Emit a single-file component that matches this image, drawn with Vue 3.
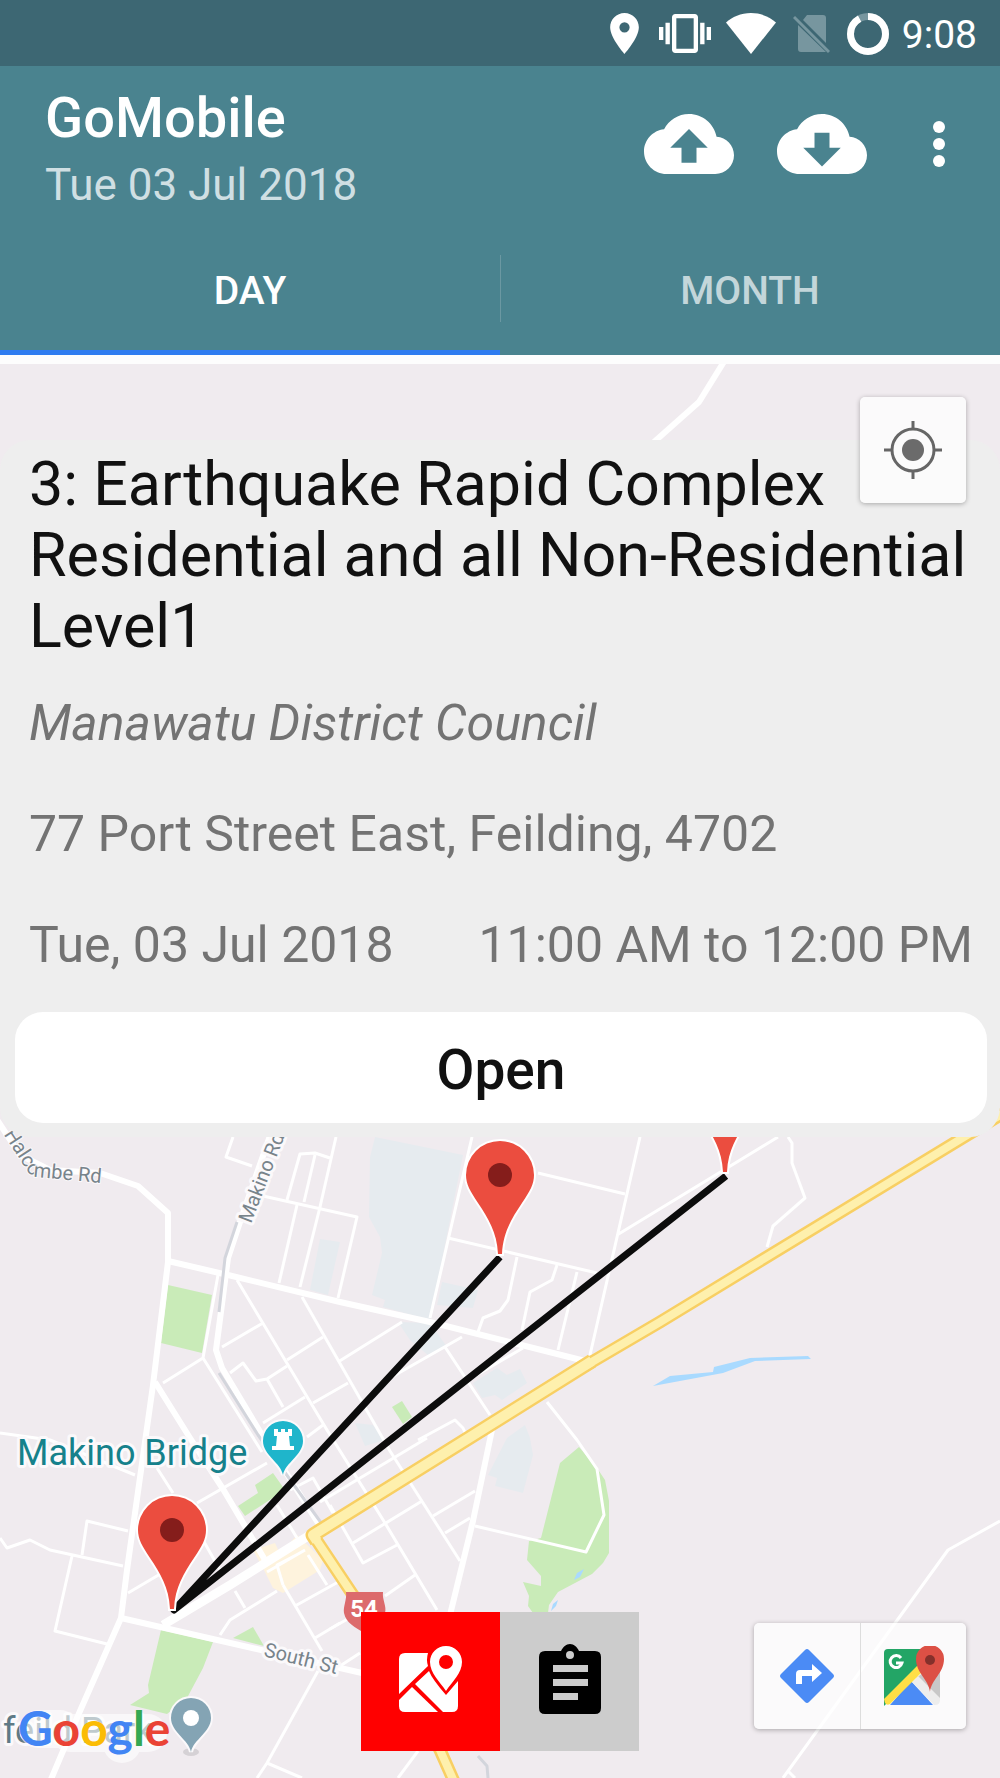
<template>
  <div class="screen">
    <header class="app-header">
      <div class="status-bar">
        <svg class="status-pin" viewBox="5 2 14 20" aria-hidden="true">
          <path d="M12 2C8.13 2 5 5.13 5 9c0 5.25 7 13 7 13s7-7.75 7-13c0-3.87-3.13-7-7-7zm0 9.5a2.5 2.5 0 1 1 0-5 2.5 2.5 0 0 1 0 5z" />
        </svg>
        <svg class="status-vibrate" viewBox="0 3 24 18" aria-hidden="true">
          <path d="M0 15h2V9H0v6zm3 2h2V7H3v10zm19-8v6h2V9h-2zm-3 8h2V7h-2v10zM16.5 3h-9C6.67 3 6 3.67 6 4.5v15c0 .83.67 1.5 1.5 1.5h9c.83 0 1.5-.67 1.5-1.5v-15c0-.83-.67-1.5-1.5-1.5zM16 19H8V5h8v14z" />
        </svg>
        <svg class="status-wifi" viewBox="0 0 50 41" aria-hidden="true">
          <path d="M25 41L0 9.500C6 4 15 0 25 0s19 4 25 9.500z" />
        </svg>
        <svg class="status-sim" viewBox="0 0 37 40" aria-hidden="true">
          <path d="M14 1h16q3 0 3 3v25L10 6zM5 11l28 27H8q-3 0-3-3z" />
          <path d="M1 3L36 38" />
        </svg>
        <svg class="status-battery" viewBox="0 0 42 42" aria-hidden="true">
          <circle class="battery-track" cx="21" cy="21" r="17.500" />
          <circle class="battery-level" cx="21" cy="21" r="17.500" pathLength="100" transform="rotate(-90 21 21)" />
        </svg>
        <span class="clock">9:08</span>
      </div>

      <div class="toolbar">
        <div class="titles">
          <h1>GoMobile</h1>
          <p>Tue 03 Jul 2018</p>
        </div>
        <button class="icon-btn" aria-label="Upload">
          <svg viewBox="0 0 24 24">
            <path d="M19.350 10.040C18.670 6.590 15.640 4 12 4 9.110 4 6.600 5.640 5.350 8.040 2.340 8.360 0 10.910 0 14c0 3.310 2.690 6 6 6h13c2.760 0 5-2.240 5-5 0-2.640-2.050-4.780-4.650-4.960zM14 13v4h-4v-4H7l5-5 5 5h-3z" />
          </svg>
        </button>
        <button class="icon-btn" aria-label="Download">
          <svg viewBox="0 0 24 24">
            <path d="M19.350 10.040C18.670 6.590 15.640 4 12 4 9.110 4 6.600 5.640 5.350 8.040 2.340 8.360 0 10.910 0 14c0 3.310 2.690 6 6 6h13c2.760 0 5-2.240 5-5 0-2.640-2.050-4.780-4.650-4.960zM17 13l-5 5-5-5h3V9h4v4h3z" />
          </svg>
        </button>
        <button class="more-btn" aria-label="More options">
          <svg viewBox="0 0 12 48">
            <circle cx="6" cy="7" r="6" />
            <circle cx="6" cy="24" r="6" />
            <circle cx="6" cy="41" r="6" />
          </svg>
        </button>
      </div>

      <nav class="tabs">
        <button
            v-for="tab in tabs"
            :key="tab"
            class="tab"
            :class="{ active: tab === activeTab }"
            @click="activeTab = tab"
        >
          {{ tab }}
        </button>
      </nav>
    </header>

    <main class="map-view">
      <svg
          class="map"
          viewBox="0 364 1000 1414"
          preserveAspectRatio="xMidYMax slice"
          role="img"
          aria-label="Map"
      >
        <defs>
          <path id="halcombe" d="M-22 1095L26 1169Q30 1176 36 1177L101 1183" />
          <path id="marker" d="M-2 0C-3-22-12-36-22-51C-30-63-34-70-34-79A34 34 0 0 1 34-79C34-70 30-63 22-51C12-36 3-22 2 0Z" />
          <path id="poi" d="M0 34C-2 22-20 14-20 0A20 20 0 0 1 20 0C20 14 2 22 0 34Z" />
        </defs>

        <path v-for="d in blocks" :key="d" class="block" :d="d" />
        <path v-for="d in parks" :key="d" class="park" :d="d" />
        <path class="shops" d="M253 1550L275 1543L280 1554L297 1535L323 1560L320 1570L283 1593L273 1588L265 1572Z" />
        <path class="water" d="M653 1386L670 1376L713 1372L714 1367L750 1358L808 1356L811 1359L755 1361L723 1373Z" />
        <path class="water" d="M574 1580L577 1573L584 1569L580 1577ZM551 1611L553 1604L558 1600L556 1606Z" />

        <path v-for="d in lanes" :key="d" class="lane" :d="d" />
        <path v-for="d in roads" :key="d" class="road" :d="d" />
        <path class="rail" d="M237 1222L225 1258L219 1312M219 1373L258 1435L322 1524" />
        <path class="rail" d="M478 1756L487 1766L488 1778" />
        <path class="avenue" d="M313 1533L230 1585L163 1625" />
        <path class="highway-edge" :d="highway" />
        <path class="highway-edge wide" :d="mainStreet" />
        <path class="highway" :d="highway" />
        <path class="highway wide" :d="mainStreet" />

        <path class="shield" d="M346 1592H383C382 1600 387 1606 385 1613C383 1623 373 1627 364 1633C355 1627 346 1623 344 1613C343 1606 347 1600 346 1592Z" />
        <text class="shield-text" x="364" y="1617">54</text>

        <text class="street bent"><textPath href="#halcombe" startOffset="100%">Halcombe Rd</textPath></text>
        <text class="street start" transform="translate(251 1224) rotate(-69)">Makino Rd</text>
        <text class="street start" transform="translate(263 1656) rotate(14)">South St</text>

        <g transform="translate(283 1441)">
          <use href="#poi" class="poi bridge" />
          <path class="poi-icon" d="M-9-12h4v3h3v-3h4v3h3v-3h4v7h-3l1 10h4v4h-22v-4h4l1-10h-3z" />
        </g>
        <text class="place" x="17" y="1465">Makino Bridge</text>

        <text class="place park-name" x="3" y="1743">feild Park</text>
        <ellipse class="poi-shadow" cx="191" cy="1752" rx="8" ry="4" />
        <g transform="translate(191 1718)">
          <use href="#poi" class="poi garden" />
          <circle class="poi-icon" r="8" />
        </g>

        <path class="route" d="M500 1257L174 1610L726 1176" />
        <g v-for="m in markers" :key="m.x" :transform="`translate(${m.x} ${m.y})`">
          <use href="#marker" class="marker" />
          <circle class="marker-dot" cy="-79" r="12" />
        </g>

        <path class="google-halo" d="M38 1729H60M70 1733H148M122 1738V1744" />
        <text class="google" x="18" y="1746">
          <tspan class="g-blue">G</tspan><tspan class="g-red">o</tspan><tspan class="g-yellow">o</tspan><tspan class="g-blue">g</tspan><tspan class="g-green">l</tspan><tspan class="g-red">e</tspan>
        </text>
      </svg>

      <section class="card">
        <h2>{{ job.title }}</h2>
        <p class="client">{{ job.client }}</p>
        <p>{{ job.address }}</p>
        <p class="when">
          <span>{{ job.date }}</span>
          <span>{{ job.time }}</span>
        </p>
        <button class="open-btn">Open</button>
      </section>

      <button class="map-btn locate" aria-label="My location">
        <svg viewBox="0 0 60 60">
          <circle class="ring" cx="30" cy="30" r="21" />
          <circle cx="30" cy="30" r="11" />
          <path class="ring" d="M30 1v8M30 51v8M1 30h8M51 30h8" />
        </svg>
      </button>

      <div class="view-switch">
        <button class="switch-btn selected" aria-label="Map view">
          <svg viewBox="1 -2 64 70">
            <path d="M30 7H7Q1 7 1 13V48L30 20Q28 14 30 7Z" />
            <path d="M1 54L14 41L40 66H7Q1 66 1 60Z" />
            <path d="M17 38L31 25Q34 33 48 49L60 35V60Q60 66 54 66H45Z" />
            <path d="M48 0C39 0 32 7 32 16C32 27 42 36 48 45C54 36 64 27 64 16C64 7 57 0 48 0ZM48 9a7 7 0 1 1 0 14 7 7 0 0 1 0-14Z" />
          </svg>
        </button>
        <button class="switch-btn" aria-label="List view">
          <svg viewBox="0 0 64 70">
            <path d="M57 7H41C39 3 36 0 32 0S25 3 23 7H7Q1 7 1 13V64Q1 70 7 70H57Q63 70 63 64V13Q63 7 57 7ZM32 7a4 4 0 1 1 0 8 4 4 0 0 1 0-8ZM40 56H15v-7h25ZM50 42H15v-7h35ZM50 28H15v-7h35Z" />
          </svg>
        </button>
      </div>

      <div class="map-links">
        <button class="map-btn" aria-label="Directions">
          <svg viewBox="0 0 60 60">
            <path class="dir-bg" d="M28 4Q30 2 32 4L56 28Q58 30 56 32L32 56Q30 58 28 56L4 32Q2 30 4 28Z" />
            <path class="dir-arrow" d="M19 38V28Q19 24 23 24H35V18L45 27L35 36V30H25V38Z" />
          </svg>
        </button>
        <button class="map-btn" aria-label="Open in Google Maps">
          <svg viewBox="0 0 60 60">
            <path class="m-grey" d="M32 32L56 14V52Q56 56 52 56Z" />
            <path class="m-green" d="M0 7Q0 3 4 3H38V23L0 60Z" />
            <path class="m-blue" d="M27 35L49 59H6Z" />
            <path class="m-white" d="M28 36L34 30L56 52V54Q56 59 51 59H50Z" />
            <path class="m-yellow" d="M0 53L35 18L38 26L6 58Q3 60 1 57Z" />
            <path class="m-g" d="M17 12A6 6 0 1 0 18 17H12" />
            <path class="m-red" d="M46 46C45 34 32 27 32 13A14 14 0 0 1 60 13C60 27 47 34 46 46Z" />
            <circle class="m-dot" cx="46" cy="14" r="5" />
          </svg>
        </button>
      </div>
    </main>
  </div>
</template>

<script setup>
import { ref } from 'vue'

const tabs = ['DAY', 'MONTH']
const activeTab = ref('DAY')

const job = {
  title: '3: Earthquake Rapid Complex Residential and all Non-Residential Level1',
  client: 'Manawatu District Council',
  address: '77 Port Street East, Feilding, 4702',
  date: 'Tue, 03 Jul 2018',
  time: '11:00 AM to 12:00 PM'
}

const markers = [
  { x: 725, y: 1172 },
  { x: 500, y: 1254 },
  { x: 172, y: 1609 }
]

const highway = 'M1010 1109L660 1322L585 1366M313 1535L353 1595L400 1672L440 1750L456 1786'
const mainStreet = 'M592 1361L472 1436L313 1535L317 1541'

const roads = [
  'M-4 1118L20 1155L50 1170L100 1173L138 1186L168 1213L168 1262L153 1385L127 1570L121 1618L80 1711L49 1784',
  'M168 1261L228 1275L340 1302L430 1322L585 1361',
  'M272 1130L240 1222L228 1258L216 1350L222 1368L262 1435L320 1526',
  'M155 1382L190 1438L223 1489L265 1560',
  'M121 1618L270 1652L362 1673',
  'M493 1425L473 1521L450 1615',
  'M725 360L699 402L645 450'
]

const lanes = [
  'M233 1137L226 1157L252 1166',
  'M263 1196L357 1217L338 1298',
  'M287 1200L300 1154L315 1153L330 1158M315 1155L304 1202',
  'M336 1137L320 1207L300 1287M297 1205L279 1283',
  'M218 1275L203 1358L262 1452M203 1358L163 1383',
  'M237 1280L327 1430L385 1523L437 1610',
  'M302 1297L390 1451L460 1561',
  'M330 1505L363 1563L397 1545',
  'M445 1347L490 1415M222 1347L263 1323M287 1360L323 1337M338 1362L402 1322',
  'M390 1378L462 1337M463 1383L523 1348M313 1403L348 1383',
  'M230 1373L243 1363L256 1381L267 1379L287 1366M267 1379L283 1407',
  'M263 1423L305 1397M307 1437L323 1425',
  'M418 1440L455 1420L463 1428L467 1437',
  'M472 1137L430 1318M448 1238L597 1273M538 1173L625 1194',
  'M640 1137L590 1355M617 1235L778 1137',
  'M517 1257L508 1300L500 1311L483 1318L478 1332',
  'M557 1265L552 1280L530 1292L522 1330M577 1272L558 1350',
  'M788 1137L792 1143L792 1163L805 1198L773 1226L767 1247',
  'M320 1502L427 1438M353 1543L422 1501M433 1516L475 1491M445 1533L470 1518',
  'M385 1596L415 1575M330 1629L360 1612M340 1666L360 1653M418 1751L398 1778',
  'M295 1606L340 1581M315 1638L340 1623M283 1585L322 1651',
  'M318 1671L267 1763L257 1778M267 1763L302 1778',
  'M220 1635L230 1620L277 1591M235 1591L245 1608M308 1555L327 1585',
  'M128 1593L167 1570M128 1531L87 1521L82 1555',
  'M0 1538L7 1548L30 1540L50 1550L123 1566M72 1556L55 1631L107 1644',
  'M197 1503L267 1463M203 1540L220 1570M157 1468L173 1493',
  'M0 1433L50 1440L135 1475M290 1490L313 1478L333 1513M277 1505L297 1538',
  'M267 1572L305 1550M283 1585L277 1565L300 1553',
  'M547 1402L577 1440L597 1469L604 1515L586 1552L475 1526',
  'M1000 1521L948 1550L783 1778M788 1771L795 1778'
]

const parks = [
  'M168 1285L212 1295L202 1353L161 1343Z',
  'M392 1407L402 1401L412 1417L403 1424Z',
  'M238 1506L258 1493L255 1485L273 1473L285 1490L245 1516Z',
  'M161 1630L213 1642L203 1668L187 1698L167 1714L130 1705L149 1693L148 1685Z',
  'M233 1638L253 1627L264 1646Z',
  'M579 1447L560 1463L541 1538L529 1541L527 1560L541 1576L541 1586L523 1582L529 1596L528 1606L533 1613L548 1613L549 1605L558 1592L592 1574L603 1563L609 1553L609 1501L605 1480L597 1468Z'
]

const blocks = [
  'M375 1137L463 1155L430 1320L383 1307L385 1300L372 1295L382 1253L380 1237L369 1217L370 1157Z',
  'M442 1282L478 1290L473 1308L437 1305Z',
  'M398 1322L430 1323L447 1347L428 1355L410 1340Z',
  'M320 1239L340 1242L328 1295L310 1290Z',
  'M473 1383L497 1368L507 1375L520 1369L527 1383L502 1400L495 1395L482 1398Z',
  'M507 1438L525 1425L530 1438L533 1455L523 1493L495 1486L497 1478L488 1475Z',
  'M355 1423L373 1425L385 1440L365 1446Z'
]
</script>

<style>
body {
  margin: 0;
  background: #fdfdfd;
}
</style>

<style scoped>
.screen {
  min-height: 100vh;
  display: flex;
  flex-direction: column;
  font-family: Roboto, "Liberation Sans", sans-serif;
}
button {
  border: none;
  padding: 0;
  background: none;
  font-family: inherit;
  cursor: pointer;
}
h1,
h2,
p {
  margin: 0;
  font-weight: 400;
}
svg {
  display: block;
}
.app-header {
  background: #4a838f;
  color: white;
}
.status-bar {
  height: 66px;
  padding: 1px 23px 0 0;
  box-sizing: border-box;
  display: flex;
  align-items: center;
  justify-content: flex-end;
  background: #3d6773;
}
.status-bar svg {
  fill: white;
}
.status-pin {
  width: 29px;
  height: 41px;
  margin-right: 20px;
}
.status-vibrate {
  width: 52px;
  height: 39px;
  margin-right: 15px;
}
.status-wifi {
  width: 50px;
  height: 41px;
  margin-right: 17px;
}
.status-bar .status-sim {
  width: 37px;
  height: 40px;
  margin-right: 17px;
  fill: #77969f;
  stroke: #77969f;
}
.status-sim path:first-child {
  stroke: none;
}
.status-sim path:last-child {
  stroke-width: 3;
}
.status-bar .status-battery {
  width: 42px;
  height: 42px;
  margin-right: 13px;
  fill: none;
}
.battery-track {
  stroke: #77969f;
  stroke-width: 7;
}
.battery-level {
  stroke: white;
  stroke-width: 7;
  stroke-dasharray: 92 8;
}
.clock {
  padding-top: 2px;
  font-size: 39px;
}
.toolbar {
  min-height: 156px;
  padding: 0 32px 0 45px;
  display: flex;
  align-items: center;
  gap: 43px;
}
.titles {
  flex: 1;
  align-self: flex-start;
  padding-top: 19px;
}
.titles h1 {
  font-size: 56px;
  line-height: 66px;
  font-weight: 500;
}
.titles p {
  font-size: 44px;
  line-height: 68px;
  color: #cfdfe3;
}
.icon-btn svg {
  width: 90px;
  height: 90px;
  fill: white;
}
.more-btn {
  width: 58px;
  display: flex;
  justify-content: center;
}
.more-btn svg {
  width: 12px;
  height: 48px;
  fill: white;
}
.tabs {
  display: flex;
}
.tab {
  flex: 1;
  height: 133px;
  padding-top: 9px;
  border-bottom: 5px solid transparent;
  color: #c3d6da;
  font-size: 39px;
  font-weight: 500;
  position: relative;
}
.tab.active {
  color: white;
  border-bottom-color: #2f7cf0;
}
.tab + .tab::before {
  content: "";
  position: absolute;
  left: 0;
  top: 33px;
  width: 1px;
  height: 67px;
  background: #6b98a2;
}
.map-view {
  flex: 1;
  margin-top: 9px;
  padding-top: 76px;
  min-height: 1100px;
  box-sizing: border-box;
  position: relative;
  overflow: hidden;
  background: #f0ebef;
}
.map {
  position: absolute;
  inset: 0;
  width: 100%;
  height: 100%;
}
.block {
  fill: #e6ebef;
}
.park {
  fill: #c9ebb8;
}
.shops {
  fill: #fef3dd;
}
.water {
  fill: #a9daff;
}
.lane,
.road,
.avenue,
.rail,
.highway,
.highway-edge,
.route {
  fill: none;
  stroke: white;
  stroke-linejoin: round;
}
.lane {
  stroke-width: 3;
}
.road {
  stroke-width: 6;
}
.avenue {
  stroke-width: 9;
}
.rail {
  stroke: #d3d5dc;
  stroke-width: 3;
}
.highway-edge {
  stroke: #f8cf63;
  stroke-width: 13;
}
.highway {
  stroke: #fef0ad;
  stroke-width: 8;
}
.highway-edge.wide {
  stroke-width: 15;
}
.highway.wide {
  stroke-width: 10;
}
.route {
  stroke: #0c0c0c;
  stroke-width: 7;
}
.marker {
  fill: #eb4d3f;
  stroke: white;
  stroke-width: 4;
  paint-order: stroke;
}
.marker-dot {
  fill: #851d1b;
}
.shield {
  fill: #dc6a6c;
}
.shield-text {
  fill: white;
  font-size: 24px;
  font-weight: 700;
  text-anchor: middle;
}
.street {
  fill: #78848b;
  font-size: 20px;
  text-anchor: end;
  stroke: #fbf9fb;
  stroke-width: 6;
  stroke-linejoin: round;
  paint-order: stroke;
}
.street.start {
  text-anchor: start;
}
.street.bent {
  stroke-width: 2;
}
.place {
  fill: #16818b;
  font-size: 36px;
  stroke: #fbf9fb;
  stroke-width: 6;
  stroke-linejoin: round;
  paint-order: stroke;
}
.park-name {
  fill: #5f7a86;
}
.poi {
  stroke: #fbf9fb;
  stroke-width: 4;
  paint-order: stroke;
}
.bridge {
  fill: #1fb5cb;
}
.garden {
  fill: #84a4b4;
}
.poi-icon {
  fill: white;
}
.poi-shadow {
  fill: #d5d1d5;
}
.google {
  font-family: Lato, sans-serif;
  font-size: 48px;
  font-weight: 700;
}
.google-halo {
  fill: none;
  stroke: white;
  stroke-width: 38;
  stroke-linecap: round;
  stroke-linejoin: round;
  opacity: .6;
}
.g-blue {
  fill: #4285f4;
}
.g-red {
  fill: #ea4335;
}
.g-yellow {
  fill: #fbbc05;
}
.g-green {
  fill: #34a853;
}
.card {
  position: relative;
  padding: 9px 13px 14px 15px;
  border-radius: 30px;
  background: #eee;
  color: #737373;
  font-size: 50px;
  line-height: 59px;
}
.card h2 {
  padding: 0 14px;
  color: #111;
  font-size: 61px;
  line-height: 71px;
}
.card p {
  padding: 0 14px;
  margin-bottom: 52px;
}
.card .client {
  margin-top: 32px;
  font-style: italic;
}
.card .when {
  margin-bottom: 37px;
  display: flex;
  justify-content: space-between;
}
.open-btn {
  width: 100%;
  height: 111px;
  padding-top: 5px;
  border-radius: 28px;
  background: white;
  color: #111;
  font-size: 55px;
  font-weight: 500;
}
.map-btn {
  width: 106px;
  height: 106px;
  display: flex;
  align-items: center;
  justify-content: center;
}
.map-btn svg {
  width: 60px;
  height: 60px;
}
.locate,
.map-links {
  position: absolute;
  right: 34px;
  border-radius: 5px;
  background: rgba(255,255,255,.75);
  box-shadow: 0 1px 5px rgba(0,0,0,.3);
}
.locate {
  top: 33px;
  fill: #6b6b6b;
}
.locate .ring {
  fill: none;
  stroke: #666;
  stroke-width: 3;
}
.map-links {
  bottom: 49px;
  display: flex;
}
.map-links .map-btn + .map-btn {
  border-left: 1px solid #ddd;
}
.dir-bg,
.m-blue {
  fill: #4b8bf5;
}
.dir-arrow {
  fill: white;
}
.m-green {
  fill: #23a566;
}
.m-grey {
  fill: #c8c8c8;
}
.m-white {
  fill: #ededed;
}
.m-yellow {
  fill: #ffdf45;
}
.m-g {
  fill: none;
  stroke: white;
  stroke-width: 3;
}
.m-red {
  fill: #dc5045;
}
.m-dot {
  fill: #84302b;
}
.view-switch {
  position: absolute;
  left: 0;
  right: 0;
  bottom: 27px;
  width: 278px;
  margin: 0 auto;
  display: flex;
}
.switch-btn {
  flex: 1;
  height: 139px;
  padding-bottom: 6px;
  display: flex;
  align-items: center;
  justify-content: center;
  background: #ccc;
}
.switch-btn.selected {
  background: #f00;
  fill: white;
}
.switch-btn svg {
  width: 64px;
  height: 70px;
}
</style>
